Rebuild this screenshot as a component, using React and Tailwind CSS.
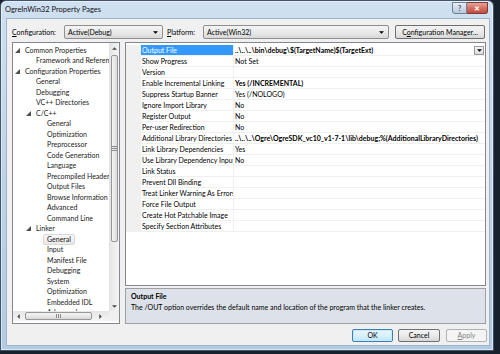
import React from 'react';

const tree = [
  { t: 'Common Properties', l: 0, e: true },
  { t: 'Framework and References', l: 1 },
  { t: 'Configuration Properties', l: 0, e: true },
  { t: 'General', l: 1 },
  { t: 'Debugging', l: 1 },
  { t: 'VC++ Directories', l: 1 },
  { t: 'C/C++', l: 1, e: true },
  { t: 'General', l: 2 },
  { t: 'Optimization', l: 2 },
  { t: 'Preprocessor', l: 2 },
  { t: 'Code Generation', l: 2 },
  { t: 'Language', l: 2 },
  { t: 'Precompiled Headers', l: 2 },
  { t: 'Output Files', l: 2 },
  { t: 'Browse Information', l: 2 },
  { t: 'Advanced', l: 2 },
  { t: 'Command Line', l: 2 },
  { t: 'Linker', l: 1, e: true },
  { t: 'General', l: 2, sel: true },
  { t: 'Input', l: 2 },
  { t: 'Manifest File', l: 2 },
  { t: 'Debugging', l: 2 },
  { t: 'System', l: 2 },
  { t: 'Optimization', l: 2 },
  { t: 'Embedded IDL', l: 2 },
  { t: 'Advanced', l: 2 },
];

const indent = ['pl-[1px]', 'pl-[12px]', 'pl-[23px]'];

const props = [
  ['Output File', '..\\..\\..\\bin\\debug\\$(TargetName)$(TargetExt)', true],
  ['Show Progress', 'Not Set'],
  ['Version', ''],
  ['Enable Incremental Linking', 'Yes (/INCREMENTAL)', true],
  ['Suppress Startup Banner', 'Yes (/NOLOGO)'],
  ['Ignore Import Library', 'No'],
  ['Register Output', 'No'],
  ['Per-user Redirection', 'No'],
  ['Additional Library Directories', '..\\..\\..\\Ogre\\OgreSDK_vc10_v1-7-1\\lib\\debug;%(AdditionalLibraryDirectories)', true],
  ['Link Library Dependencies', 'Yes'],
  ['Use Library Dependency Inputs', 'No'],
  ['Link Status', ''],
  ['Prevent Dll Binding', ''],
  ['Treat Linker Warning As Errors', ''],
  ['Force File Output', ''],
  ['Create Hot Patchable Image', ''],
  ['Specify Section Attributes', ''],
];

const Arrow = ({ dir = 'down', className = '' }) => {
  const pts = {
    down: '0,0 6,0 3,3',
    up: '0,3 6,3 3,0',
    left: '3,0 3,6 0,3',
    right: '0,0 0,6 3,3',
  };
  const box = dir === 'left' || dir === 'right' ? '0 0 3 6' : '0 0 6 3';
  const w = dir === 'left' || dir === 'right' ? 3 : 5;
  const h = dir === 'left' || dir === 'right' ? 5 : 3;
  return (
    <svg width={w} height={h} viewBox={box} className={className}>
      <polygon points={pts[dir]} fill="currentColor" />
    </svg>
  );
};

const Expander = () => (
  <svg width="5" height="5" viewBox="0 0 5 5">
    <polygon points="5,0 5,5 0,5" fill="#4d4d4d" />
  </svg>
);

const Grip = ({ vertical }) => (
  <div className={vertical ? 'flex flex-col gap-[1px]' : 'flex gap-[1px]'}>
    <div className={vertical ? 'w-[5px] h-[1px] bg-[#8a8a8a]' : 'w-[1px] h-[4px] bg-[#8a8a8a]'} />
    <div className={vertical ? 'w-[5px] h-[1px] bg-[#8a8a8a]' : 'w-[1px] h-[4px] bg-[#8a8a8a]'} />
    <div className={vertical ? 'w-[5px] h-[1px] bg-[#8a8a8a]' : 'w-[1px] h-[4px] bg-[#8a8a8a]'} />
  </div>
);

const Combo = ({ value, width }) => (
  <div className={`${width} h-[14px] flex items-center justify-between pl-[3px] pr-[4px] rounded-[2px] border border-[#8f8f8f] bg-gradient-to-b from-[#f4f4f4] via-[#eaeaea] to-[#d8d8d8]`}>
    <span>{value}</span>
    <Arrow className="text-black" />
  </div>
);

export default function App() {
  return (
    <div className="w-[500px] h-[354px] bg-[#17212d] overflow-hidden font-['Lato','Liberation_Sans',sans-serif] text-[7px] text-black leading-none">
      <div className="w-[494px] h-[351px] flex flex-col rounded-t-[6px] border border-[#42546a] bg-gradient-to-b from-[#cfe0f1] via-[#bfd3e8] to-[#b3cae3] shadow-[inset_0_0_0_1px_rgba(255,255,255,0.5)]">
        {/* title bar */}
        <div className="h-[17px] flex items-start justify-between pl-[4px] pr-[5px]">
          <span className="mt-[5px] text-[7.5px] text-[#111]">OgreInWin32 Property Pages</span>
          <div className="flex mt-[1px]">
            <div className="w-[15px] h-[12px] flex items-center justify-center rounded-bl-[3px] border border-[#6d7f94] bg-gradient-to-b from-[#e6eef7] to-[#b7c9dc] text-[7px] text-[#3c4d62] font-bold">?</div>
            <div className="w-[21px] h-[12px] flex items-center justify-center rounded-br-[3px] border border-l-0 border-[#7a3a36] bg-gradient-to-b from-[#e5a59c] via-[#d46f62] to-[#c2493c] text-white text-[7px] font-bold">✕</div>
          </div>
        </div>

        {/* client */}
        <div className="flex-1 ml-[5px] mr-[3px] mb-[4px] bg-[#f0f0f0] border border-[#9fb4cb] flex flex-col pl-[5px]">
          {/* config row */}
          <div className="flex items-center h-[14px] mt-[6px]">
            <span className="w-[52px]"><span className="underline">C</span>onfiguration:</span>
            <Combo value="Active(Debug)" width="w-[99px]" />
            <span className="w-[36px] ml-[4px]"><span className="underline">P</span>latform:</span>
            <Combo value="Active(Win32)" width="w-[186px]" />
            <div className="ml-[6px] w-[90px] h-[14px] flex items-center justify-center rounded-[2px] border border-[#707070] bg-gradient-to-b from-[#f2f2f2] via-[#ebebeb] to-[#d6d6d6]">
              <span>C<span className="underline">o</span>nfiguration Manager...</span>
            </div>
          </div>

          {/* main area */}
          <div className="flex mt-[3px] h-[282px]">
            {/* tree */}
            <div className="w-[108px] flex flex-col border border-[#828790] bg-white pb-[2px]">
              <div className="flex flex-1 min-h-0">
                <div className="flex-1 overflow-hidden pt-[2px] text-[#1a1a1a]">
                  {tree.map((it, i) => (
                    <div key={i} className={`flex items-center h-[10.5px] whitespace-nowrap ${indent[it.l]}`}>
                      <div className="w-[11px] flex-none flex items-center pl-[1px]">
                        {it.e ? <Expander /> : null}
                      </div>
                      {it.sel ? (
                        <span className="-ml-[4px] px-[3px] py-[1px] rounded-[2px] border border-[#d9d9d9] bg-gradient-to-b from-[#f8f8f8] to-[#e8e8e8]">{it.t}</span>
                      ) : (
                        <span>{it.t}</span>
                      )}
                    </div>
                  ))}
                </div>
                {/* vertical scrollbar */}
                <div className="w-[10px] flex-none flex flex-col bg-gradient-to-r from-[#e6e6e6] to-[#f4f4f4] border-l border-[#e3e3e3]">
                  <div className="h-[10px] flex items-center justify-center text-[#4a4a4a]"><Arrow dir="up" /></div>
                  <div className="flex-1 pt-[2px]">
                    <div className="h-[187px] mx-[1px] rounded-[2px] border border-[#979797] bg-gradient-to-r from-[#f4f4f4] via-[#e8e8e8] to-[#d8d8d8] flex items-center justify-center">
                      <Grip vertical />
                    </div>
                  </div>
                  <div className="h-[10px] flex items-center justify-center text-[#4a4a4a]"><Arrow dir="down" /></div>
                </div>
              </div>
              {/* horizontal scrollbar */}
              <div className="h-[10px] flex flex-none">
                <div className="flex-1 flex bg-gradient-to-b from-[#e6e6e6] to-[#f4f4f4]">
                  <div className="w-[10px] flex items-center justify-center text-[#4a4a4a]"><Arrow dir="left" /></div>
                  <div className="ml-[2px] w-[67px] my-[1px] rounded-[2px] border border-[#979797] bg-gradient-to-b from-[#f4f4f4] via-[#e8e8e8] to-[#d8d8d8] flex items-center justify-center">
                    <Grip />
                  </div>
                  <div className="flex-1 flex items-center justify-center text-[#4a4a4a]"><Arrow dir="right" /></div>
                </div>
                <div className="w-[10px] bg-[#f0f0f0]" />
              </div>
            </div>

            {/* property grid + description */}
            <div className="ml-[5px] w-[361px] flex flex-col">
              <div className="flex-1 border border-[#828790] bg-white pt-[2px]">
                {props.map(([name, value, bold], i) => (
                  <div key={i} className="flex h-[11px]">
                    <div className="w-[15px] flex-none bg-[#f0f0f0]" />
                    <div className={`w-[93px] flex-none overflow-hidden whitespace-nowrap flex items-center pl-[1px] border-b border-r border-[#f0f0f0] ${i === 0 ? 'bg-[#3399ff] text-white' : ''}`}>
                      {name}
                    </div>
                    <div className={`flex-1 min-w-0 flex items-center justify-between pl-[1px] border-b border-[#f0f0f0] whitespace-nowrap overflow-hidden ${bold ? 'font-bold' : ''}`}>
                      <span>{value}</span>
                      {i === 0 ? (
                        <div className="w-[10px] h-[9px] mr-[1px] flex items-center justify-center border border-[#9a9a9a] bg-gradient-to-b from-[#f6f6f6] to-[#dcdcdc]">
                          <Arrow />
                        </div>
                      ) : null}
                    </div>
                  </div>
                ))}
              </div>
              <div className="h-[2px] bg-[#f0f0f0]" />
              <div className="h-[36px] border border-[#a0a0a0] bg-[#dde2ea] pl-[5px] pt-[4px]">
                <div className="font-bold">Output File</div>
                <div className="mt-[4px]">The /OUT option overrides the default name and location of the program that the linker creates.</div>
              </div>
            </div>
          </div>

          {/* buttons */}
          <div className="flex justify-end mt-[5px] pr-[2px] gap-[5px]">
            <div className="w-[41px] h-[13px] flex items-center justify-center rounded-[2px] border border-[#3c7fb1] bg-gradient-to-b from-[#eaf6fd] via-[#d9f0fc] to-[#bee6fd] shadow-[inset_0_0_0_1px_#c6eafd]">OK</div>
            <div className="w-[42px] h-[13px] flex items-center justify-center rounded-[2px] border border-[#707070] bg-gradient-to-b from-[#f2f2f2] via-[#ebebeb] to-[#d6d6d6]">Cancel</div>
            <div className="ml-[1px] w-[41px] h-[13px] flex items-center justify-center rounded-[2px] border border-[#adb2b5] bg-[#f4f4f4] text-[#838383]"><span><span className="underline">A</span>pply</span></div>
          </div>
        </div>
      </div>
    </div>
  );
}
